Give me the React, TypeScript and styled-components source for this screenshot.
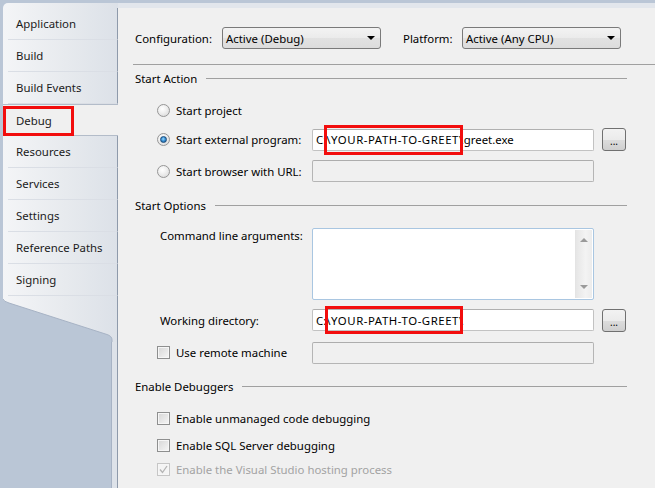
import styled, { createGlobalStyle, css } from 'styled-components';

const GlobalStyle = createGlobalStyle`
  html, body {
    margin: 0;
    padding: 0;
  }
  body {
    font-family: 'Noto Sans', 'Open Sans', sans-serif;
    font-size: 11.4px;
    color: #000;
  }
`;

const Frame = styled.div`
  width: 655px;
  height: 488px;
  box-sizing: border-box;
  padding: 3px 0 0 3px;
  background: #bac6d6;
  display: flex;
  overflow: hidden;
`;

const Sidebar = styled.div`
  width: 115px;
  flex: none;
  display: flex;
  flex-direction: column;
`;

const TabStack = styled.div`
  padding-top: 5px;
  background: linear-gradient(90deg, #f4f5f7 0%, #e7eaee 55%, #dce1e8 100%);
  border-top-left-radius: 5px;
  display: flex;
  flex-direction: column;
`;

const Tab = styled.div<{ $active?: boolean }>`
  height: 32px;
  box-sizing: border-box;
  display: flex;
  align-items: center;
  position: relative;
  color: #1b1b1b;
  ${(p) =>
    p.$active
      ? css`
          background: #f0f0f0;
          border-top: 1px solid #b3bcc9;
          border-bottom: 1px solid #b3bcc9;
          padding-left: 13px;
        `
      : css`
          margin-left: 5px;
          padding-left: 8px;
          border-right: 1px solid #8e9aab;
          border-bottom: 1px solid #dadee5;
        `}
`;

const TabMark = styled.span`
  position: absolute;
  left: 0;
  top: 1px;
  width: 71px;
  height: 30px;
  box-sizing: border-box;
  border: 3px solid #f20d0d;
`;

const SlantWrap = styled.div`
  height: 46px;
  flex: none;
  border-right: 1px solid #8e9aab;
  svg {
    display: block;
  }
`;

const Tail = styled.div`
  flex: 1;
  border-right: 1px solid #8e9aab;
  background: linear-gradient(
    90deg,
    #bac6d6 108px,
    #a7b3c5 108px,
    #a7b3c5 109px,
    #dde2e9 109px
  );
`;

const Main = styled.div`
  flex: 1;
  display: flex;
  flex-direction: column;
  background: #e2e6ec;
  padding-top: 5px;
`;

const Panel = styled.div`
  flex: 1;
  background: #f0f0f0;
  padding: 19px 0 0 17px;
  display: flex;
  flex-direction: column;
`;

const ConfigRow = styled.div`
  display: flex;
  align-items: center;
  height: 22px;
`;

const ConfigLabel = styled.span<{ $w: number; $ml?: number }>`
  width: ${(p) => p.$w}px;
  margin-left: ${(p) => p.$ml ?? 0}px;
  flex: none;
`;

const Combo = styled.div`
  width: 159px;
  height: 22px;
  box-sizing: border-box;
  border: 1px solid #7a7a7a;
  border-radius: 3px;
  background: linear-gradient(#f3f3f3, #ebebeb 50%, #e2e2e2 51%, #dcdcdc);
  display: flex;
  align-items: center;
  justify-content: space-between;
  padding: 0 5px 0 3px;
`;

const ComboArrow = styled.span`
  width: 0;
  height: 0;
  border-left: 4px solid transparent;
  border-right: 4px solid transparent;
  border-top: 4px solid #000;
`;

const TopRule = styled.div`
  height: 1px;
  margin: 15px 0 0 -2px;
  background: #a0a0a0;
`;

const SectionHeading = styled.div<{ $mt: number }>`
  display: flex;
  align-items: center;
  height: 16px;
  margin-top: ${(p) => p.$mt}px;
  &::after {
    content: '';
    flex: 1;
    height: 1px;
    background: #a0a0a0;
    margin: 1px 28px 0 9px;
  }
`;

const Row = styled.div<{ $mt?: number; $h: number; $top?: boolean }>`
  display: flex;
  align-items: ${(p) => (p.$top ? 'flex-start' : 'center')};
  height: ${(p) => p.$h}px;
  margin-top: ${(p) => p.$mt ?? 0}px;
  padding-left: 22px;
`;

const Radio = styled.span<{ $checked?: boolean }>`
  width: 13px;
  height: 13px;
  box-sizing: border-box;
  border-radius: 50%;
  border: 1px solid #969696;
  background: radial-gradient(circle at 40% 35%, #ffffff 0%, #f0f0f0 40%, #d4d4d4 100%);
  flex: none;
  display: flex;
  align-items: center;
  justify-content: center;
  ${(p) =>
    p.$checked &&
    css`
      &::after {
        content: '';
        width: 7px;
        height: 7px;
        box-sizing: border-box;
        border-radius: 50%;
        border: 1px solid #1b4a78;
        background: radial-gradient(circle at 45% 40%, #9fdcff 0%, #3a93d8 45%, #17528d 100%);
      }
    `}
`;

const Check = styled.span<{ $disabled?: boolean }>`
  width: 13px;
  height: 13px;
  box-sizing: border-box;
  border: 1px solid ${(p) => (p.$disabled ? '#c6c6c6' : '#8e8f8f')};
  box-shadow: inset 0 0 0 1px #f6f6f6;
  background: ${(p) =>
    p.$disabled ? '#f4f4f4' : 'linear-gradient(135deg, #d6d6d6, #f6f6f6)'};
  flex: none;
  display: flex;
  align-items: center;
  justify-content: center;
  svg {
    display: block;
  }
`;

const OptionLabel = styled.span<{ $w?: number; $disabled?: boolean }>`
  margin-left: 6px;
  width: ${(p) => (p.$w ? `${p.$w}px` : 'auto')};
  flex: none;
  white-space: nowrap;
  color: ${(p) => (p.$disabled ? '#a3a3a3' : '#000')};
`;

const FieldLabel = styled.span<{ $pt?: number }>`
  width: 155px;
  padding-left: 3px;
  padding-top: ${(p) => p.$pt ?? 0}px;
  box-sizing: border-box;
  flex: none;
`;

const Field = styled.div<{ $disabled?: boolean }>`
  width: 282px;
  height: 22px;
  box-sizing: border-box;
  border: 1px solid ${(p) => (p.$disabled ? '#b5b5b5' : '#c2c2c2')};
  border-top-color: ${(p) => (p.$disabled ? '#adadad' : '#b0b0b0')};
  border-radius: 2px;
  background: ${(p) => (p.$disabled ? '#f0f0f0' : '#ffffff')};
  display: flex;
  align-items: center;
  padding-left: 3px;
  position: relative;
  white-space: nowrap;
`;

const PathPart = styled.span`
  letter-spacing: 0.55px;
`;

const RedBox = styled.span<{ $left: number; $top: number; $w: number; $h: number }>`
  position: absolute;
  left: ${(p) => p.$left}px;
  top: ${(p) => p.$top}px;
  width: ${(p) => p.$w}px;
  height: ${(p) => p.$h}px;
  box-sizing: border-box;
  border: 3px solid #f20d0d;
`;

const MultiField = styled.div`
  width: 282px;
  height: 72px;
  box-sizing: border-box;
  border: 1px solid #a9c6e1;
  border-radius: 2px;
  background: #fff;
  display: flex;
  justify-content: flex-end;
  padding: 1px;
`;

const ScrollTrack = styled.div`
  width: 16px;
  background: linear-gradient(90deg, #e6e6e6, #f3f3f3 60%, #ececec);
  border-left: 1px solid #e4e4e4;
  display: flex;
  flex-direction: column;
  justify-content: space-between;
  align-items: center;
  padding: 8px 0 9px;
`;

const ScrollArrow = styled.span<{ $down?: boolean }>`
  width: 0;
  height: 0;
  border-left: 4px solid transparent;
  border-right: 4px solid transparent;
  ${(p) =>
    p.$down
      ? css`
          border-top: 4px solid #9a9a9a;
        `
      : css`
          border-bottom: 4px solid #9a9a9a;
        `}
`;

const BrowseButton = styled.div`
  width: 24px;
  height: 23px;
  margin-left: 8px;
  box-sizing: border-box;
  border: 1px solid #707070;
  border-radius: 3px;
  background: linear-gradient(#f2f2f2, #ebebeb 50%, #dddddd 51%, #cfcfcf);
  display: flex;
  justify-content: center;
  align-items: flex-end;
  padding-bottom: 4px;
  font-size: 10px;
  line-height: 10px;
  flex: none;
`;

const tabs = [
  'Application',
  'Build',
  'Build Events',
  'Debug',
  'Resources',
  'Services',
  'Settings',
  'Reference Paths',
  'Signing',
];

const SlantEdge = () => (
  <svg width="114" height="46" viewBox="0 0 114 46">
    <defs>
      <linearGradient id="tabFill" x1="0" x2="1" y1="0" y2="0">
        <stop offset="0" stopColor="#f4f5f7" />
        <stop offset="0.55" stopColor="#e7eaee" />
        <stop offset="1" stopColor="#dce1e8" />
      </linearGradient>
    </defs>
    <rect width="114" height="46" fill="#bac6d6" />
    <path
      d="M0 0 H114 V46 H109 V44 Q109 40 104 38.5 L6 7 Q0.5 5.5 0 3 Z"
      fill="url(#tabFill)"
    />
    <path
      d="M0 3 Q0.5 5.5 6 7 L104 38.5 Q109 40 109 44 V46"
      fill="none"
      stroke="#a7b3c5"
      strokeWidth="1"
    />
  </svg>
);

const CheckMark = () => (
  <svg width="9" height="9" viewBox="0 0 9 9">
    <path d="M1 4.5 L3.5 7.5 L8 1" fill="none" stroke="#b4b4b4" strokeWidth="1.3" />
  </svg>
);

const App = () => {
  return (
    <>
      <GlobalStyle />
      <Frame>
        <Sidebar>
          <TabStack>
            {tabs.map((t) => (
              <Tab key={t} $active={t === 'Debug'}>
                {t}
                {t === 'Debug' && <TabMark />}
              </Tab>
            ))}
          </TabStack>
          <SlantWrap>
            <SlantEdge />
          </SlantWrap>
          <Tail />
        </Sidebar>
        <Main>
          <Panel>
            <ConfigRow>
              <ConfigLabel $w={87}>Configuration:</ConfigLabel>
              <Combo>
                Active (Debug)
                <ComboArrow />
              </Combo>
              <ConfigLabel $w={59} $ml={22}>
                Platform:
              </ConfigLabel>
              <Combo>
                Active (Any CPU)
                <ComboArrow />
              </Combo>
            </ConfigRow>
            <TopRule />

            <SectionHeading $mt={5}>Start Action</SectionHeading>
            <Row $mt={9} $h={30}>
              <Radio />
              <OptionLabel>Start project</OptionLabel>
            </Row>
            <Row $h={29}>
              <Radio $checked />
              <OptionLabel $w={136}>Start external program:</OptionLabel>
              <Field>
                C:<PathPart>\YOUR-PATH-TO-GREET\</PathPart>greet.exe
                <RedBox $left={11} $top={-5} $w={139} $h={30} />
              </Field>
              <BrowseButton>...</BrowseButton>
            </Row>
            <Row $h={34}>
              <Radio />
              <OptionLabel $w={136}>Start browser with URL:</OptionLabel>
              <Field $disabled />
            </Row>

            <SectionHeading $mt={9}>Start Options</SectionHeading>
            <Row $mt={15} $h={72} $top>
              <FieldLabel $pt={0}>Command line arguments:</FieldLabel>
              <MultiField>
                <ScrollTrack>
                  <ScrollArrow />
                  <ScrollArrow $down />
                </ScrollTrack>
              </MultiField>
            </Row>
            <Row $mt={9} $h={22}>
              <FieldLabel>Working directory:</FieldLabel>
              <Field>
                C:<PathPart>\YOUR-PATH-TO-GREET\</PathPart>
                <RedBox $left={12} $top={-4} $w={138} $h={28} />
              </Field>
              <BrowseButton>...</BrowseButton>
            </Row>
            <Row $mt={10} $h={23}>
              <Check />
              <OptionLabel $w={136}>Use remote machine</OptionLabel>
              <Field $disabled />
            </Row>

            <SectionHeading $mt={14}>Enable Debuggers</SectionHeading>
            <Row $mt={13} $h={22}>
              <Check />
              <OptionLabel>Enable unmanaged code debugging</OptionLabel>
            </Row>
            <Row $mt={4} $h={24}>
              <Check />
              <OptionLabel>Enable SQL Server debugging</OptionLabel>
            </Row>
            <Row $h={24}>
              <Check $disabled>
                <CheckMark />
              </Check>
              <OptionLabel $disabled>Enable the Visual Studio hosting process</OptionLabel>
            </Row>
          </Panel>
        </Main>
      </Frame>
    </>
  );
};

export default App;
